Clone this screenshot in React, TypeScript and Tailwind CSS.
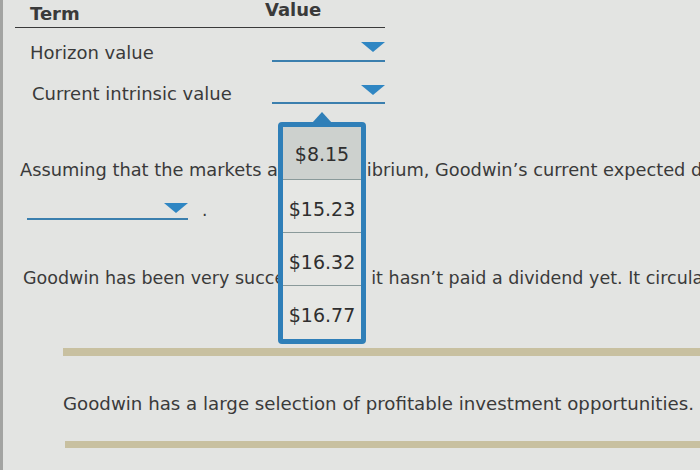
import React from 'react';

const options = ['$8.15', '$15.23', '$16.32', '$16.77'];

function Caret() {
  return (
    <svg width="24" height="10" viewBox="0 0 24 10" className="block">
      <polygon points="0,0 24,0 12,10" fill="#2f86c3" />
    </svg>
  );
}

function Dropdown({ width, gap }: { width: string; gap: string }) {
  return (
    <div className={`flex flex-col items-end ${width}`}>
      <Caret />
      <div className={`${gap} h-[2px] w-full bg-[#3b7fae]`} />
    </div>
  );
}

function OptionsPopup() {
  return (
    <div className="absolute left-[275px] top-[112px] flex flex-col items-center">
      <div className="h-0 w-0 border-x-[10px] border-b-[11px] border-x-transparent border-b-[#2f7fb8]" />
      <div className="-mt-px w-[88px] rounded-[4px] border-[5px] border-[#2f7fb8] bg-[#e6e7e4]">
        {options.map((o, i) => (
          <div
            key={o}
            className={`flex h-[53px] items-start justify-center text-[19px] text-[#2f2f2f] ${i === 0 ? 'bg-[#cdd1ce] pt-[13px]' : 'pt-[15px]'} ${i < options.length - 1 ? 'border-b border-[#8a9a9a]' : ''}`}
          >
            {o}
          </div>
        ))}
      </div>
    </div>
  );
}

export default function App() {
  return (
    <div
      className="relative h-[470px] w-[700px] overflow-hidden border-l-[3px] border-[#a3a4a2] bg-[#e3e4e2] text-[#3a3a3a]"
      style={{ fontFamily: '"DejaVu Sans", Verdana, sans-serif' }}
    >
      {/* table */}
      <div className="ml-[12px] w-[370px]">
        <div className="grid h-[28px] grid-cols-[250px_1fr] border-b-[1.5px] border-[#3a3a3a] text-[18px] font-bold leading-none">
          <span className="pl-[15px] pt-[5px]">Term</span>
          <span className="pt-[1px]">Value</span>
        </div>
        <div className="grid h-[42px] grid-cols-[257px_1fr] items-end text-[18px]">
          <span className="pb-[4px] pl-[15px]">Horizon value</span>
          <div className="pb-[8px]">
            <Dropdown width="w-[113px]" gap="mt-[8px]" />
          </div>
        </div>
        <div className="grid h-[41px] grid-cols-[257px_1fr] items-end text-[18px]">
          <span className="pb-[4px] pl-[17px]">Current intrinsic value</span>
          <div className="pb-[7px]">
            <Dropdown width="w-[113px]" gap="mt-[7px]" />
          </div>
        </div>
      </div>

      {/* paragraph */}
      <p className="ml-[17px] mt-[46px] whitespace-nowrap text-[17.8px]">
        Assuming that the markets are in equilibrium, Goodwin’s current expected dividend yield is
      </p>
      <div className="ml-[24px] mt-[18px] flex items-end gap-[14px]">
        <Dropdown width="w-[161px]" gap="mt-[5px]" />
        <span className="pb-[1px] text-[17px] leading-none">.</span>
      </div>
      <p className="ml-[20px] mt-[45px] whitespace-nowrap text-[17.5px]">
        Goodwin has been very successful, but it hasn’t paid a dividend yet. It circulates a report
      </p>

      <div className="ml-[60px] mt-[57px] h-[8px] w-[640px] bg-[#c8c0a0]" />
      <p className="ml-[60px] mt-[34px] whitespace-nowrap text-[18.2px]">
        Goodwin has a large selection of profitable investment opportunities.
      </p>
      <div className="ml-[62px] mt-[24px] h-[7px] w-[640px] bg-[#c8c0a0]" />

      <OptionsPopup />
    </div>
  );
}
